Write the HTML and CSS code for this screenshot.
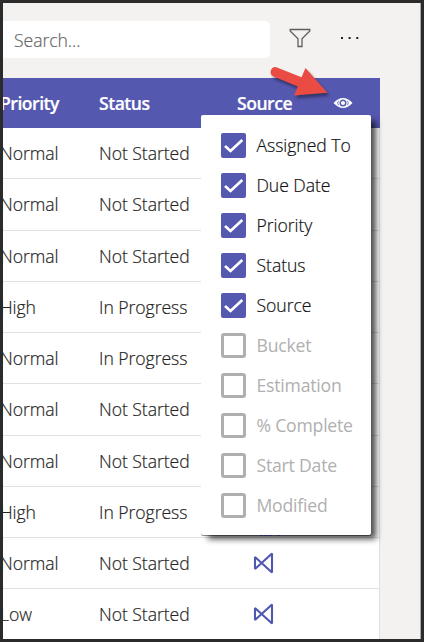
FILE: index.html
```html
<!DOCTYPE html>
<html lang="en">
<head>
<meta charset="utf-8">
<title>Tasks</title>
<link rel="stylesheet" href="styles.css">
</head>
<body>
<svg class="defs" width="0" height="0">
  <symbol id="check" viewBox="0 0 25 25"><path d="M4 13l5.5 5L21.3 7" fill="none" stroke="#fff" stroke-width="2.7"/></symbol>
  <symbol id="planner" viewBox="0 0 22 24"><path d="M3 6V18L20 2.5V21.5Z" fill="none" stroke="#4f57b0" stroke-width="2.1" stroke-linejoin="miter" stroke-miterlimit="2"/></symbol>
</svg>
<div class="window">
  <div class="toolbar">
    <div class="search">Search...</div>
    <svg class="filter" width="22" height="20" viewBox="0 0 22 20"><path d="M1.2 1.5H20.8V3L13 10.7V18.5H9V10.7L1.2 3Z" fill="none" stroke="#605e5c" stroke-width="1.3"/></svg>
    <svg class="more" width="20" height="4" viewBox="0 0 20 4"><path d="M1 1h2v2H1zM8.6 1h2v2h-2zM16.3 1h2v2h-2z" fill="#222"/></svg>
  </div>
  <div class="table">
    <div class="row head"><span class="priority">Priority</span><span class="status">Status</span><span class="source">Source</span>
      <svg class="eye" width="20" height="12" viewBox="0 0 20 12"><path d="M.5 6Q10-4 19.5 6Q10 16 .5 6Z" fill="#fff"/><circle cx="10" cy="6" r="2.8" fill="none" stroke="#5558af" stroke-width="1.4"/><path d="M5.5 3.8Q3.8 6 5.5 8.2M14.5 3.8Q16.2 6 14.5 8.2" fill="none" stroke="#5558af" stroke-width=".8"/></svg>
    </div>
    <div class="row"><span class="priority">Normal</span><span class="status">Not Started</span></div>
    <div class="row"><span class="priority">Normal</span><span class="status">Not Started</span></div>
    <div class="row"><span class="priority">Normal</span><span class="status">Not Started</span></div>
    <div class="row"><span class="priority">High</span><span class="status">In Progress</span></div>
    <div class="row"><span class="priority">Normal</span><span class="status">In Progress</span></div>
    <div class="row"><span class="priority">Normal</span><span class="status">Not Started</span></div>
    <div class="row"><span class="priority">Normal</span><span class="status">Not Started</span></div>
    <div class="row"><span class="priority">High</span><span class="status">In Progress</span></div>
    <div class="row"><span class="priority">Normal</span><span class="status">Not Started</span><svg class="plan"><use href="#planner"/></svg></div>
    <div class="row"><span class="priority">Low</span><span class="status">Not Started</span><svg class="plan"><use href="#planner"/></svg></div>
  </div>
  <div class="menu">
    <div class="item"><span class="box on"><svg><use href="#check"/></svg></span><span>Assigned To</span></div>
    <div class="item"><span class="box on"><svg><use href="#check"/></svg></span><span>Due Date</span></div>
    <div class="item"><span class="box on"><svg><use href="#check"/></svg></span><span>Priority</span></div>
    <div class="item"><span class="box on"><svg><use href="#check"/></svg></span><span>Status</span></div>
    <div class="item"><span class="box on"><svg><use href="#check"/></svg></span><span>Source</span></div>
    <div class="item off"><span class="box"></span><span>Bucket</span></div>
    <div class="item off"><span class="box"></span><span>Estimation</span></div>
    <div class="item off"><span class="box"></span><span>% Complete</span></div>
    <div class="item off"><span class="box"></span><span>Start Date</span></div>
    <div class="item off"><span class="box"></span><span>Modified</span></div>
  </div>
  <svg class="peek" width="20" height="1" viewBox="0 0 20 1"><path d="M0 0h3v1H0zM4 0h3v1H4zM8 0h4v1H8zM17 0h3v1h-3z" fill="#23265f"/></svg>
  <svg class="arrow" width="70" height="44" viewBox="0 0 70 44"><path d="M9.3 5.2L34.5 15.2L38.5 6L60.5 30.7L27 33.5L30.8 24.5L6.5 14.5A4.9 4.9 0 0 1 9.3 5.2Z" fill="#ea4b43"/></svg>
</div>
</body>
</html>
```
FILE: styles.css
```css
* { box-sizing: border-box; }
body { margin: 0; }
.defs { position: absolute; }
.window {
  position: relative;
  width: 424px;
  height: 642px;
  border: 3px solid #2b2b2b;
  background: #f3f2f1;
  box-shadow: inset -1px 0 #aaa;
  overflow: hidden;
  font: 300 17.6px/24px "Open Sans", "Noto Sans", sans-serif;
  letter-spacing: -.05px;
  -webkit-text-stroke: .2px;
  color: #252423;
  white-space: nowrap;
}
.toolbar { display: flex; align-items: center; height: 75px; padding-top: 18px; padding-bottom: 20px; }
.search {
  width: 267px;
  height: 37px;
  padding: 7px 11px;
  border-radius: 0 5px 5px 0;
  background: #fff;
  color: #666;
}
.filter { margin-left: 19px; margin-top: -3px; }
.more { margin-left: 29px; margin-top: -3px; }
.table { width: 377px; background: #fff; border-right: 1px solid #e1dfdd; }
.row {
  display: grid;
  grid-template-columns: 96px 138px 1fr;
  align-items: center;
  height: 51.25px;
  border-bottom: 1px solid #e1e1e1;
}
.row:last-child { height: 50px; border-bottom: 0; }
.priority { margin-left: -3px; }
.head {
  grid-template-columns: 96px 138px 95.5px 1fr;
  width: 377px;
  height: 50px;
  border: 0;
  background: #5558af;
  color: #fff;
  font-weight: 600;
}
.head span { letter-spacing: -.5px; }
.plan { width: 22px; height: 24px; margin-left: 15px; }
.menu {
  position: absolute;
  left: 198px;
  top: 112px;
  width: 170px;
  height: 420px;
  padding-top: 10px;
  border-radius: 2px;
  background: #fff;
  box-shadow: 6px 5px 6px -1px rgba(0, 0, 0, .7), 0 1px 0 #999;
  color: #111;
}
.item { display: flex; align-items: center; gap: 11px; height: 40px; padding-left: 20px; }
.item > span:last-child { margin-left: -.5px; }
.off { color: #b0b0b0; font-weight: 400; letter-spacing: -.2px; -webkit-text-stroke: 0; }
.box { width: 25px; height: 25px; border: 3px solid #afafaf; border-radius: 3px; flex: none; }
.on { border: 0; background: #5558af; border-radius: 2px; }
.box svg { display: block; width: 25px; height: 25px; }
.peek { position: absolute; left: 257px; top: 532px; }
.arrow { position: absolute; left: 264px; top: 59px; filter: drop-shadow(2px 3px 1.5px rgba(0, 0, 0, .4)); }
```
